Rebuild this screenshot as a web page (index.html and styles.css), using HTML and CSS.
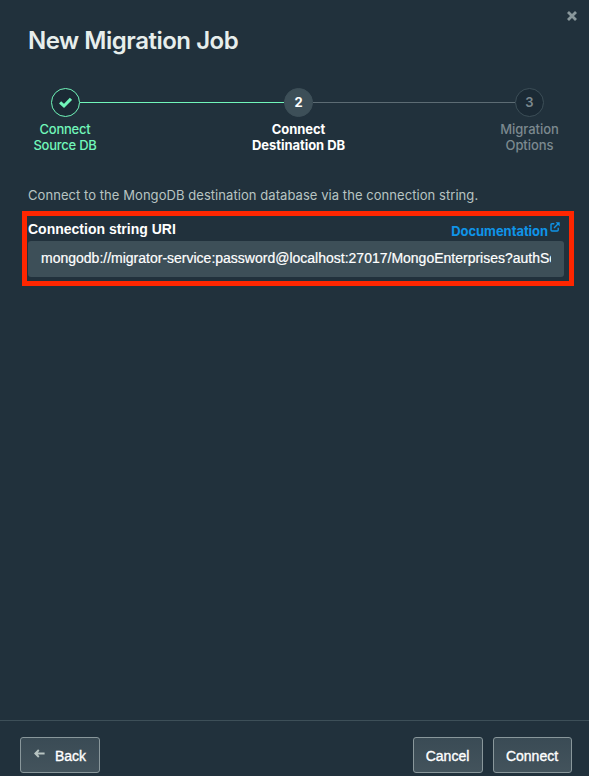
FILE: index.html
```html
<!DOCTYPE html>
<html lang="en">
<head>
<meta charset="utf-8">
<title>New Migration Job</title>
<link rel="stylesheet" href="styles.css">
</head>
<body>
<main class="modal">
  <header class="modal-header">
    <h1>New Migration Job</h1>
    <svg class="close" viewBox="0 0 10 10" role="img" aria-label="Close"><path d="M1 1L9 9M9 1L1 9"/></svg>
  </header>
  <ol class="stepper">
    <li class="step done">
      <span class="dot"><svg viewBox="0 0 12 12"><path d="M1 5.8L4.6 9.2L11 2.6"/></svg></span>
      <span class="label">Connect<br>Source DB</span>
    </li>
    <li class="line line-done"></li>
    <li class="step current">
      <span class="dot">2</span>
      <span class="label">Connect<br>Destination DB</span>
    </li>
    <li class="line line-next"></li>
    <li class="step next">
      <span class="dot">3</span>
      <span class="label">Migration<br>Options</span>
    </li>
  </ol>
  <p class="intro">Connect to the MongoDB destination database via the connection string.</p>
  <section class="field">
    <div class="field-head">
      <span class="field-label">Connection string URI</span>
      <a class="docs"><span>Documentation</span><svg viewBox="0 0 10 10"><path d="M4.3 1.7H2A1 1 0 0 0 1 2.7V8A1 1 0 0 0 2 9H7.2A1 1 0 0 0 8.2 8V5.7M4 6L8.2 1.8"/><path class="tip" d="M5.6 .3H9.7V4.4Z"/></svg></a>
    </div>
    <div class="input"><div class="value">mongodb://migrator-service:password@localhost:27017/MongoEnterprises?authSource=admin</div></div>
  </section>
  <footer class="modal-footer">
    <button class="back"><svg viewBox="0 0 11 9"><path d="M10.6 4.5H1.4M4.8 1L1.3 4.5L4.8 8"/></svg><span>Back</span></button>
    <button class="cancel">Cancel</button>
    <button class="connect">Connect</button>
  </footer>
</main>
</body>
</html>
```
FILE: styles.css
```css
* { box-sizing: border-box; }
body { margin: 0; background: #21313c; font-family: Inter, "Liberation Sans", sans-serif; color: #e7eeec; }
.modal { height: 776px; display: flex; flex-direction: column; overflow: hidden; background: #21313c; }
.modal-header { display: flex; justify-content: space-between; height: 88px; padding: 11px 12px 0 28px; flex: none; }
h1 { margin: 15px 0 0; font-size: 24px; line-height: 30px; font-weight: 600; letter-spacing: -0.48px; white-space: nowrap; }
.close { width: 10px; height: 10px; fill: none; stroke: #89979b; stroke-width: 2.8; }

.stepper { display: flex; flex: none; height: 98px; margin: 0; padding: 0 0 0 25px; list-style: none; font-size: 13px; line-height: 16px; }
.step { display: flex; flex-direction: column; align-items: center; width: 80px; flex: none; text-align: center; font-weight: 500; letter-spacing: -0.05px; white-space: nowrap; }
.current { width: 109px; font-weight: 700; color: #fff; letter-spacing: -0.05px; }
.dot { display: flex; align-items: center; justify-content: center; width: 29px; height: 29px; margin-bottom: 4px; padding-bottom: 1px; border: 1px solid #3d4f58; border-radius: 50%; background: #1b2a35; letter-spacing: 0; }
.dot svg { width: 13px; height: 13px; fill: none; stroke: #71f6ba; stroke-width: 2.8; }
.done { color: #71f6ba; letter-spacing: -0.25px; }
.done .dot { border-color: #71f6ba; }
.current .dot { background: #3d4f58; }
.next { color: #7c898f; }
.next .dot { font-weight: 600; }
.line { flex: none; height: 1px; margin-top: 14px; background: #5d6c74; }
.line-done { width: 204px; margin-left: -25px; margin-right: -40px; background: #71f6ba; }
.line-next { width: 202px; margin-left: -40px; margin-right: -25.5px; }

.intro { flex: none; height: 25px; margin: 0; padding: 1px 28px; font-size: 13px; line-height: 16px; letter-spacing: 0.06px; color: #b8c4c2; white-space: nowrap; }
.field { flex: none; width: 552px; height: 75px; margin-left: 22px; border: 5px solid #ff2600; padding: 0 5px 0 1px; }
.field-head { display: flex; justify-content: space-between; height: 25px; padding-right: 4px; }
.field-label { padding-top: 5px; font: bold 14px/16px "Liberation Sans", Arial, sans-serif; color: #fff; white-space: nowrap; }
.docs { display: flex; gap: 2px; padding-top: 7px; font-size: 13px; font-weight: 700; line-height: 16px; letter-spacing: -0.06px; color: #0f94e8; }
.docs svg { width: 10px; height: 10px; margin-top: -1px; fill: none; stroke: #0f94e8; stroke-width: 1.4; }
.docs .tip { fill: #0f94e8; stroke: none; }
.input { height: 36px; padding: 0 13px; border-radius: 3px; background: #3d4f58; }
.value { overflow: hidden; white-space: nowrap; font: 14px/35px "Liberation Sans", Arial, sans-serif; color: #fff; -webkit-text-stroke: 0.2px #fff; }

.modal-footer { display: flex; gap: 10px; height: 56px; margin-top: auto; padding: 16px 17px 0 20px; border-top: 1px solid #3d4f58; }
button { height: 36px; padding: 1px 1px 0 0; border: 1px solid #89979b; border-radius: 3px; background: linear-gradient(#3a4b55, #43535c); font: 14px/18px "Liberation Sans", Arial, sans-serif; color: #fff; -webkit-text-stroke: 0.35px #fff; }
.back { display: flex; align-items: center; width: 80px; margin-right: auto; padding-left: 13px; gap: 10px; }
.back svg { width: 11px; height: 9px; margin-top: -4px; fill: none; stroke: #b8c4c2; stroke-width: 1.9; }
.cancel { width: 70px; }
.connect { width: 79px; }
```
